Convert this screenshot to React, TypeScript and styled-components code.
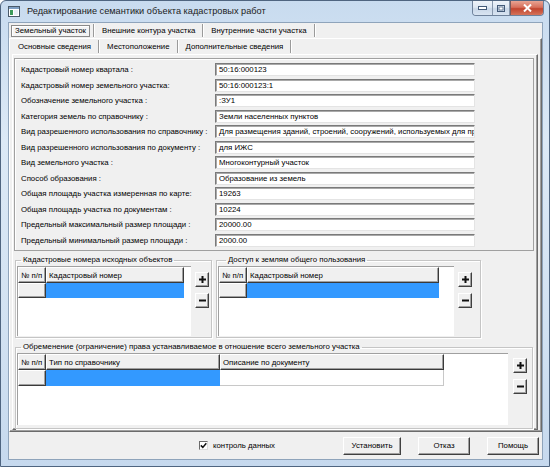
import React from 'react';
import styled, { createGlobalStyle } from 'styled-components';

const Global = createGlobalStyle`
  html, body { margin: 0; padding: 0; background: #ffffff; }
  body { font-family: "Liberation Sans", Arial, sans-serif; color: #000; }
  * { box-sizing: border-box; }
`;

const FS = '7.8px';

const Window = styled.div`
  width: 550px;
  height: 467px;
  display: flex;
  flex-direction: column;
  background: linear-gradient(180deg, #c8dbef 0%, #dce9f6 30%, #d2e2f2 70%, #c6d9ee 100%);
  border: 1px solid #4f6580;
  border-radius: 6px 6px 0 0;
  overflow: hidden;
`;

const TitleBar = styled.div`
  height: 21px;
  display: flex;
  align-items: flex-start;
  flex-shrink: 0;
`;

const TitleIcon = styled.svg`
  width: 12px;
  height: 11px;
  margin: 5px 0 0 7px;
`;

const TitleText = styled.div`
  margin: 5px 0 0 7px;
  font-size: 9.2px;
  line-height: 11px;
  color: #1b1b1b;
`;

const Controls = styled.div`
  margin-left: auto;
  margin-right: 5px;
  display: flex;
  border: 1px solid #6f829b;
  border-top: none;
  border-radius: 0 0 4px 4px;
  overflow: hidden;
  height: 15px;
`;

const CtlButton = styled.div<{ $w: number; $close?: boolean }>`
  width: ${(p) => p.$w}px;
  height: 100%;
  display: flex;
  align-items: center;
  justify-content: center;
  border-left: ${(p) => (p.$close ? '1px solid #7c5a5a' : 'none')};
  border-right: ${(p) => (p.$close ? 'none' : '1px solid #8797ac')};
  background: ${(p) =>
    p.$close
      ? 'linear-gradient(180deg, #e8a493 0%, #d7705c 45%, #c2452f 55%, #d4735a 100%)'
      : 'linear-gradient(180deg, #eef3f9 0%, #dde7f2 45%, #c9d7e8 55%, #d9e4f1 100%)'};
`;

const Client = styled.div`
  margin: 0 6px 6px 7px;
  flex: 1;
  background: #f0f0f0;
  border: 1px solid #8fa4bb;
  display: flex;
  flex-direction: column;
`;

const TabRow = styled.div<{ $pad: number }>`
  height: 15px;
  display: flex;
  align-items: center;
  padding-left: ${(p) => p.$pad}px;
  flex-shrink: 0;
`;

const Tab = styled.div<{ $active?: boolean }>`
  height: 12px;
  display: flex;
  align-items: center;
  padding: 0 3px;
  margin-right: 3px;
  font-size: ${FS};
  white-space: nowrap;
  border: 1px solid ${(p) => (p.$active ? '#8a8a8a' : 'transparent')};
  box-shadow: ${(p) => (p.$active ? 'inset 1px 1px #ffffff' : 'none')};
  background: ${(p) => (p.$active ? '#f4f4f4' : 'transparent')};
`;

const Sep = styled.div`
  width: 2px;
  height: 13px;
  border-left: 1px solid #9a9a9a;
  border-right: 1px solid #ffffff;
  margin-right: 3px;
`;

const Page = styled.div<{ $ml: number; $mr: number; $h: number }>`
  margin: 0 ${(p) => p.$mr}px 0 ${(p) => p.$ml}px;
  height: ${(p) => p.$h}px;
  border: 1px solid;
  border-color: #ffffff #6b6b6b #6b6b6b #ffffff;
  box-shadow: inset -1px -1px #a0a0a0;
  display: flex;
  flex-direction: column;
  flex-shrink: 0;
`;

const FieldsPanel = styled.div`
  margin: 3px 3px 0 1px;
  height: 193px;
  border: 1px solid #a0a0a0;
  box-shadow: inset 1px 1px #ffffff;
  padding: 4px 0 0 6px;
  display: grid;
  grid-template-columns: 194px 260px;
  grid-auto-rows: 13px;
  row-gap: 2.5px;
  align-items: center;
  flex-shrink: 0;
`;

const Label = styled.div`
  font-size: ${FS};
  white-space: nowrap;
`;

const Input = styled.div`
  height: 13px;
  background: #ffffff;
  border: 1px solid;
  border-color: #7a7a7a #e4e4e4 #e4e4e4 #7a7a7a;
  box-shadow: inset 1px 1px #a9a9a9;
  font-size: ${FS};
  line-height: 11px;
  padding-left: 3px;
  white-space: nowrap;
  overflow: hidden;
`;

const GroupsRow = styled.div`
  display: flex;
  margin: 4px 0 0 2px;
  gap: 4px;
  flex-shrink: 0;
`;

const Group = styled.fieldset<{ $w: number; $h: number }>`
  margin: 0;
  padding: 1px 0 0 1px;
  width: ${(p) => p.$w}px;
  height: ${(p) => p.$h}px;
  min-width: 0;
  border: 1px solid #c5c5c5;
  box-shadow: inset 1px 1px #ffffff, 1px 1px #ffffff;
  display: flex;
  align-items: flex-start;
  flex-shrink: 0;
`;

const Legend = styled.legend<{ $off: number }>`
  font-size: ${FS};
  line-height: 10px;
  padding: 0 2px;
  margin-left: ${(p) => p.$off}px;
  white-space: nowrap;
`;

const GridArea = styled.div<{ $w: number; $h: number }>`
  width: ${(p) => p.$w}px;
  height: ${(p) => p.$h}px;
  background: #ffffff;
  border-left: 1px solid #a0a0a0;
  border-top: 1px solid #a0a0a0;
  flex-shrink: 0;
`;

const GridRow = styled.div<{ $h: number }>`
  display: flex;
  height: ${(p) => p.$h}px;
`;

const HeadCell = styled.div<{ $w: number }>`
  width: ${(p) => p.$w}px;
  height: 100%;
  background: #f0f0f0;
  border: 1px solid;
  border-color: #ffffff #3a3a3a #3a3a3a #ffffff;
  box-shadow: inset -1px -1px #a0a0a0;
  font-size: ${FS};
  display: flex;
  align-items: center;
  padding-left: 2px;
  white-space: nowrap;
  overflow: hidden;
  flex-shrink: 0;
`;

const DataCell = styled.div<{ $w: number; $sel?: boolean }>`
  width: ${(p) => p.$w}px;
  height: 100%;
  background: ${(p) => (p.$sel ? '#3399ff' : '#ffffff')};
  border-right: ${(p) => (p.$sel ? 'none' : '1px solid #c8c8c8')};
  border-bottom: ${(p) => (p.$sel ? 'none' : '1px solid #c8c8c8')};
  flex-shrink: 0;
`;

const SideButtons = styled.div<{ $ml: number; $mt: number }>`
  display: flex;
  flex-direction: column;
  gap: 6px;
  margin-left: ${(p) => p.$ml}px;
  margin-top: ${(p) => p.$mt}px;
`;

const SmallBtn = styled.div`
  width: 14px;
  height: 15px;
  background: #f0f0f0;
  border: 1px solid;
  border-color: #ffffff #404040 #404040 #ffffff;
  box-shadow: inset -1px -1px #a0a0a0;
  display: flex;
  align-items: center;
  justify-content: center;
`;

const Footer = styled.div`
  flex: 1;
  display: flex;
  align-items: center;
  padding: 0 3px 0 190px;
`;

const CheckWrap = styled.label`
  display: flex;
  align-items: center;
  gap: 5px;
  font-size: ${FS};
`;

const CheckBox = styled.span`
  width: 9px;
  height: 9px;
  background: #ffffff;
  border: 1px solid;
  border-color: #6a6a6a #dcdcdc #dcdcdc #6a6a6a;
  display: flex;
  align-items: center;
  justify-content: center;
`;

const Buttons = styled.div`
  margin-left: auto;
  display: flex;
  gap: 17px;
`;

const Button = styled.div<{ $w: number }>`
  width: ${(p) => p.$w}px;
  height: 18px;
  background: #f0f0f0;
  border: 1px solid;
  border-color: #ffffff #404040 #404040 #ffffff;
  box-shadow: inset -1px -1px #a0a0a0;
  display: flex;
  align-items: center;
  justify-content: center;
  font-size: ${FS};
`;

const fields: [string, string][] = [
  ['Кадастровый номер квартала :', '50:16:000123'],
  ['Кадастровый номер земельного участка:', '50:16:000123:1'],
  ['Обозначение земельного участка :', ':ЗУ1'],
  ['Категория земель по справочнику :', 'Земли населенных пунктов'],
  ['Вид разрешенного использования по справочнику :', 'Для размещения зданий, строений, сооружений, используемых для пр'],
  ['Вид разрешенного использования по документу :', 'для ИЖС'],
  ['Вид земельного участка :', 'Многоконтурный участок'],
  ['Способ образования :', 'Образование из земель'],
  ['Общая площадь участка измеренная по карте:', '19263'],
  ['Общая площадь участка по документам :', '10224'],
  ['Предельный максимальный размер площади :', '20000.00'],
  ['Предельный минимальный размер площади :', '2000.00'],
];

const PlusMinus: React.FC<{ ml: number; mt: number }> = ({ ml, mt }) => (
  <SideButtons $ml={ml} $mt={mt}>
    <SmallBtn>
      <svg width="7" height="7" viewBox="0 0 7 7">
        <rect x="2.5" y="0" width="2" height="7" fill="#111" />
        <rect x="0" y="2.5" width="7" height="2" fill="#111" />
      </svg>
    </SmallBtn>
    <SmallBtn>
      <svg width="7" height="7" viewBox="0 0 7 7">
        <rect x="0" y="2.5" width="7" height="2" fill="#111" />
      </svg>
    </SmallBtn>
  </SideButtons>
);

export default function App() {
  return (
    <>
      <Global />
      <Window>
        <TitleBar>
          <TitleIcon viewBox="0 0 12 11">
            <rect x="0.5" y="0.5" width="11" height="10" fill="#ffffff" stroke="#4a5a6a" />
            <rect x="1" y="1" width="10" height="2" fill="#7f9fc4" />
            <rect x="2" y="4" width="3" height="5" fill="#3c9a5a" />
            <rect x="6" y="4" width="4" height="5" fill="#e8eef5" />
          </TitleIcon>
          <TitleText>Редактирование семантики объекта кадастровых работ</TitleText>
          <Controls>
            <CtlButton $w={20}>
              <svg width="9" height="4" viewBox="0 0 9 4">
                <rect x="0.5" y="0.5" width="8" height="3" fill="#ffffff" stroke="#435a78" />
              </svg>
            </CtlButton>
            <CtlButton $w={17}>
              <svg width="8" height="7" viewBox="0 0 8 7">
                <rect x="0.5" y="0.5" width="7" height="6" fill="none" stroke="#435a78" />
                <rect x="2" y="2" width="4" height="3" fill="#ffffff" stroke="#435a78" strokeWidth="0.7" />
              </svg>
            </CtlButton>
            <CtlButton $w={33} $close>
              <svg width="9" height="8" viewBox="0 0 9 8">
                <path d="M1 0.5 L8 7.5 M8 0.5 L1 7.5" stroke="#ffffff" strokeWidth="2" />
              </svg>
            </CtlButton>
          </Controls>
        </TitleBar>
        <Client>
          <TabRow $pad={2}>
            <Tab $active>Земельный участок</Tab>
            <Sep />
            <Tab>Внешние контура участка</Tab>
            <Sep />
            <Tab>Внутренние части участка</Tab>
            <Sep />
          </TabRow>
          <Page $ml={0} $mr={0} $h={394}>
            <TabRow $pad={4}>
              <Tab>Основные сведения</Tab>
              <Sep />
              <Tab>Местоположение</Tab>
              <Sep />
              <Tab>Дополнительные сведения</Tab>
              <Sep />
            </TabRow>
            <Page $ml={2} $mr={3} $h={376}>
              <FieldsPanel>
                {fields.map(([l, v]) => (
                  <React.Fragment key={l}>
                    <Label>{l}</Label>
                    <Input>{v}</Input>
                  </React.Fragment>
                ))}
              </FieldsPanel>
              <GroupsRow>
                <Group $w={197} $h={83}>
                  <Legend $off={4}>Кадастровые номера исходных объектов</Legend>
                  <GridArea $w={174} $h={70}>
                    <GridRow $h={16}>
                      <HeadCell $w={28}>№ п/п</HeadCell>
                      <HeadCell $w={138}>Кадастровый номер</HeadCell>
                    </GridRow>
                    <GridRow $h={15}>
                      <HeadCell $w={28} />
                      <DataCell $w={138} $sel />
                    </GridRow>
                  </GridArea>
                  <PlusMinus ml={4} mt={6} />
                </Group>
                <Group $w={265} $h={83}>
                  <Legend $off={8}>Доступ к землям общего пользования</Legend>
                  <GridArea $w={236} $h={70}>
                    <GridRow $h={16}>
                      <HeadCell $w={28}>№ п/п</HeadCell>
                      <HeadCell $w={192}>Кадастровый номер</HeadCell>
                    </GridRow>
                    <GridRow $h={15}>
                      <HeadCell $w={28} />
                      <DataCell $w={192} $sel />
                    </GridRow>
                  </GridArea>
                  <PlusMinus ml={4} mt={6} />
                </Group>
              </GroupsRow>
              <GroupsRow>
                <Group $w={518} $h={87}>
                  <Legend $off={4}>Обременение (ограничение) права устанавливаемое в отношение всего земельного участка</Legend>
                  <GridArea $w={491} $h={72}>
                    <GridRow $h={16}>
                      <HeadCell $w={28}>№ п/п</HeadCell>
                      <HeadCell $w={174}>Тип по справочнику</HeadCell>
                      <HeadCell $w={224}>Описание по документу</HeadCell>
                    </GridRow>
                    <GridRow $h={16}>
                      <HeadCell $w={28} />
                      <DataCell $w={174} $sel />
                      <DataCell $w={224} />
                    </GridRow>
                  </GridArea>
                  <PlusMinus ml={5} mt={5} />
                </Group>
              </GroupsRow>
            </Page>
          </Page>
          <Footer>
            <CheckWrap>
              <CheckBox>
                <svg width="7" height="7" viewBox="0 0 7 7">
                  <path d="M0.8 3.4 L2.8 5.4 L6.3 1.2" fill="none" stroke="#111" strokeWidth="1.5" />
                </svg>
              </CheckBox>
              контроль данных
            </CheckWrap>
            <Buttons>
              <Button $w={58}>Установить</Button>
              <Button $w={52}>Отказ</Button>
              <Button $w={52}>Помощь</Button>
            </Buttons>
          </Footer>
        </Client>
      </Window>
    </>
  );
}
